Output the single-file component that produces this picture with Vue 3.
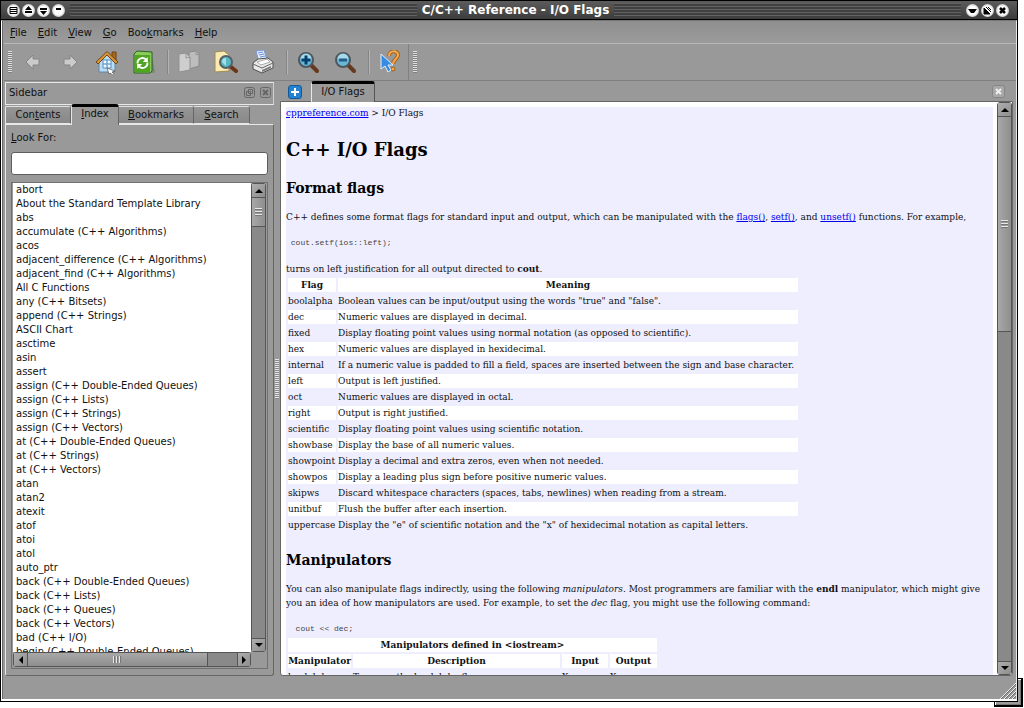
<script setup>
import { ref } from 'vue'

const query = ref('')
const menus = [
  ['', 'F', 'ile'], ['', 'E', 'dit'], ['', 'V', 'iew'], ['', 'G', 'o'], ['Boo', 'k', 'marks'], ['', 'H', 'elp'],
]
const sideTabs = [
  ['Con', 't', 'ents'], ['', 'I', 'ndex'], ['', 'B', 'ookmarks'], ['', 'S', 'earch'],
]
const entries = [
  'abort', 'About the Standard Template Library', 'abs', 'accumulate (C++ Algorithms)', 'acos',
  'adjacent_difference (C++ Algorithms)', 'adjacent_find (C++ Algorithms)', 'All C Functions',
  'any (C++ Bitsets)', 'append (C++ Strings)', 'ASCII Chart', 'asctime', 'asin', 'assert',
  'assign (C++ Double-Ended Queues)', 'assign (C++ Lists)', 'assign (C++ Strings)', 'assign (C++ Vectors)',
  'at (C++ Double-Ended Queues)', 'at (C++ Strings)', 'at (C++ Vectors)', 'atan', 'atan2', 'atexit',
  'atof', 'atoi', 'atol', 'auto_ptr', 'back (C++ Double-Ended Queues)', 'back (C++ Lists)',
  'back (C++ Queues)', 'back (C++ Vectors)', 'bad (C++ I/O)', 'begin (C++ Double-Ended Queues)',
]
const flags = [
  ['boolalpha', 'Boolean values can be input/output using the words "true" and "false".'],
  ['dec', 'Numeric values are displayed in decimal.'],
  ['fixed', 'Display floating point values using normal notation (as opposed to scientific).'],
  ['hex', 'Numeric values are displayed in hexidecimal.'],
  ['internal', 'If a numeric value is padded to fill a field, spaces are inserted between the sign and base character.'],
  ['left', 'Output is left justified.'],
  ['oct', 'Numeric values are displayed in octal.'],
  ['right', 'Output is right justified.'],
  ['scientific', 'Display floating point values using scientific notation.'],
  ['showbase', 'Display the base of all numeric values.'],
  ['showpoint', 'Display a decimal and extra zeros, even when not needed.'],
  ['showpos', 'Display a leading plus sign before positive numeric values.'],
  ['skipws', 'Discard whitespace characters (spaces, tabs, newlines) when reading from a stream.'],
  ['unitbuf', 'Flush the buffer after each insertion.'],
  ['uppercase', 'Display the "e" of scientific notation and the "x" of hexidecimal notation as capital letters.'],
]
</script>

<template>
  <div class="desktop">
    <div class="under-corner"></div>
    <div class="window">
      <header class="titlebar">
        <button class="round" aria-label="Window menu"><svg viewBox="0 0 13 13"><path d="M3 3.500h7v6H3zM3 5.500h7M3 7.500h7" fill="none" stroke="#000" /></svg></button>
        <button class="round" aria-label="Raise"><svg viewBox="0 0 13 13"><path d="M6.500 2 10 6H3zM3 7h7v2H3z" /></svg></button>
        <button class="round" aria-label="Lower"><svg viewBox="0 0 13 13"><path d="M3 4h7v2H3zM3 7h7L6.500 11z" /></svg></button>
        <button class="round" aria-label="Shade"><svg viewBox="0 0 13 13"><path d="M4 4h5v2H4z" /></svg></button>
        <span class="stripes"></span>
        <h1 class="title">C/C++ Reference - I/O Flags</h1>
        <span class="stripes"></span>
        <button class="round" aria-label="Minimize"><svg viewBox="0 0 13 13"><path d="M2 5h9L8 9H5z" /></svg></button>
        <button class="round" aria-label="Maximize"><svg viewBox="0 0 13 13"><path d="M3 4v6h6z" /><path d="M3 4v6h6zM5 3l5 5M7 3l3 3" fill="none" stroke="#000" /></svg></button>
        <button class="round" aria-label="Close window"><svg viewBox="0 0 13 13"><path d="M4 4l5 5M9 4l-5 5" stroke="#000" stroke-width="2.500" /></svg></button>
      </header>

      <div class="body">
        <nav class="menubar">
          <button v-for="m in menus" :key="m[1]">{{ m[0] }}<u>{{ m[1] }}</u>{{ m[2] }}</button>
        </nav>

        <div class="toolbar">
          <span class="grip"></span>
          <button aria-label="Back"><svg viewBox="0 0 24 24"><path d="M5 12l7-7v4h6v6h-6v4z" fill="#cbcbcb" stroke="#868686" /></svg></button>
          <button aria-label="Forward"><svg viewBox="0 0 24 24"><path d="M19 12l-7-7v4H6v6h6v4z" fill="#cbcbcb" stroke="#868686" /></svg></button>
          <button aria-label="Home">
            <svg viewBox="0 0 24 24">
              <path d="M17 2h4v8h-4z" fill="#a8691d" stroke="#71430e" />
              <path d="M4 11l8-8 8 8v11H4z" fill="#b9dcf3" stroke="#5689ae" />
              <path d="M1 12 12 1.500 23 12l-2 2-9-9-9 9z" fill="#d9953d" stroke="#74460f" />
              <path d="M8 10h8v8H8z" fill="#eef7ff" stroke="#5a8db8" />
              <path d="M12 10v8M8 14h8" stroke="#438abe" />
              <path d="M12 18l8 3-3 1 2 2-1 1-3-2-1 1z" fill="#fff" stroke="#555" stroke-width=".7" />
            </svg>
          </button>
          <button aria-label="Reload">
            <svg viewBox="0 0 24 24">
              <path d="M20 6l3 16-2 1H6z" fill="#7d8578" />
              <path d="M2 4 5 1l15 1v19l-2 2H2z" fill="#8bcb5c" stroke="#27631b" />
              <path d="M3 5h15v17H3z" fill="#4fa522" />
              <path d="M5.500 13.500a5 5 0 0 1 8.500-4M15.500 12.500a5 5 0 0 1-8.500 4" fill="none" stroke="#fff" stroke-width="1.800" />
              <path d="M15.800 7v5h-5zM5.200 19v-5h5z" fill="#fff" />
            </svg>
          </button>
          <span class="rule"></span>
          <button aria-label="Copy">
            <svg viewBox="0 0 24 24">
              <path d="M12 2l7-1 3 3v12l-10 3z" fill="#bdbdbd" stroke="#8a8a8a" />
              <path d="M2 4l7-1 4 4v13L2 22z" fill="#cecece" stroke="#909090" />
              <path d="M9 3v5l4-1M19 1v4l3-1" fill="none" stroke="#969696" />
            </svg>
          </button>
          <button aria-label="Find in text">
            <svg viewBox="0 0 24 24">
              <path d="M1 2 10 1l5 4v16L1 22z" fill="#fbebb3" stroke="#a08a50" />
              <path d="M17 17l5 4" stroke="#6d3418" stroke-width="4" stroke-linecap="round" />
              <circle cx="12" cy="12" r="6" fill="#58b7c4" stroke="#555f65" stroke-width="2" />
              <path d="M8 12a4 4 0 0 1 4-4v8z" fill="#a1e1e6" />
            </svg>
          </button>
          <button aria-label="Print">
            <svg viewBox="0 0 24 24">
              <path d="M5 1l8-1 3 10-8 2z" fill="#e4eeff" stroke="#7b98d1" />
              <path d="M7 3l5-1M8 5l5-1M9 7l5-1" stroke="#6e91d7" />
              <path d="M2 13l5-4 10-1 5 4v6l-11 5-9-4z" fill="#e9e9e9" stroke="#505050" />
              <path d="M2 14l9 4 11-5" fill="none" stroke="#666" />
              <path d="M11 20l9-4v2l-9 4z" fill="#777" />
              <path d="M6 12l10-3 3 3-9 3z" fill="#fff" stroke="#aaa" />
            </svg>
          </button>
          <span class="rule"></span>
          <button aria-label="Zoom in">
            <svg viewBox="0 0 24 24">
              <path d="M15 15l6 6" stroke="#653920" stroke-width="4" stroke-linecap="round" />
              <circle cx="10" cy="10" r="7" fill="#69b6d6" stroke="#4d585d" stroke-width="2" />
              <path d="M4.500 9a5.500 5.500 0 0 1 11 0z" fill="#a5d9eb" />
              <path d="M8.500 5.500h3v3h3v3h-3v3h-3v-3h-3v-3h3z" fill="#04406c" />
            </svg>
          </button>
          <button aria-label="Zoom out">
            <svg viewBox="0 0 24 24">
              <path d="M15 15l6 6" stroke="#653920" stroke-width="4" stroke-linecap="round" />
              <circle cx="10" cy="10" r="7" fill="#69b6d6" stroke="#4d585d" stroke-width="2" />
              <path d="M4.500 9a5.500 5.500 0 0 1 11 0z" fill="#a5d9eb" />
              <path d="M6 8.500h8v3H6z" fill="#245d87" />
            </svg>
          </button>
          <span class="rule"></span>
          <button aria-label="What's this?">
            <svg viewBox="0 0 24 24">
              <path d="M11 6c0-6 9-6 9-1 0 4-5 4-5 9" fill="none" stroke="#a8621a" stroke-width="4" />
              <path d="M11 6c0-6 9-6 9-1 0 4-5 4-5 9" fill="none" stroke="#f2ac54" stroke-width="2" />
              <circle cx="15" cy="19" r="2" fill="#f2ac54" stroke="#a25c11" />
              <path d="M3 4v15l4-3 3 6 3-2-3-5h5z" fill="#358ce2" stroke="#e0efff" />
            </svg>
          </button>
          <span class="bar-end"></span>
          <span class="grip"></span>
        </div>

        <div class="main">
          <aside class="sidebar">
            <div class="dock-title">
              <span>Sidebar</span>
              <button aria-label="Float sidebar"><svg viewBox="0 0 11 11"><rect x=".5" y=".5" width="10" height="10" rx="2" /><path d="M4.500 2.500h4v4h-4zM2.500 4.500h4v4h-4z" /></svg></button>
              <button aria-label="Close sidebar"><svg viewBox="0 0 11 11"><rect x=".5" y=".5" width="10" height="10" rx="2" /><path d="M3 3l5 5M8 3L3 8" class="thick" /></svg></button>
            </div>
            <div class="side-tabs" role="tablist">
              <button v-for="(t, i) in sideTabs" :key="t[1]" role="tab" :class="['tab', 'tab-' + i, { active: i === 1 }]">{{ t[0] }}<u>{{ t[1] }}</u>{{ t[2] }}</button>
            </div>
            <div class="panel">
              <label for="look"><u>L</u>ook For:</label>
              <input id="look" v-model="query" type="text">
              <div class="listbox">
                <ul class="entries">
                  <li v-for="e in entries" :key="e">{{ e }}</li>
                </ul>
                <div class="vbar">
                  <button aria-label="Scroll list up"><i class="up"></i></button>
                  <span class="thumb short"></span>
                  <span class="track"></span>
                  <button aria-label="Scroll list down"><i class="down"></i></button>
                </div>
                <div class="hbar">
                  <button aria-label="Scroll list left"><i class="left"></i></button>
                  <span class="thumb"></span>
                  <span class="track"></span>
                  <button aria-label="Scroll list right"><i class="right"></i></button>
                </div>
              </div>
            </div>
          </aside>

          <div class="splitter"><span></span></div>

          <section class="viewer">
            <div class="doc-tabs">
              <button class="add" aria-label="New tab"><svg viewBox="0 0 14 14"><rect x=".5" y=".5" width="13" height="13" rx="2.500" fill="#2482cf" stroke="#12599a" /><path d="M7 3v8M3 7h8" stroke="#fff" stroke-width="2" /></svg></button>
              <button class="tab active doc-tab" role="tab">I/O Flags</button>
              <button class="close" aria-label="Close tab"><svg viewBox="0 0 13 13"><rect x=".5" y=".5" width="12" height="12" rx="2" fill="#a8a8a8" stroke="#858585" /><path d="M4 4l5 5M9 4L4 9" stroke="#efefef" stroke-width="2" /></svg></button>
            </div>
            <div class="doc-frame">
              <article class="doc">
                <div class="page">
                  <div class="crumbs"><a href="#">cppreference.com</a> &gt; I/O Flags</div>
                  <h1>C++ I/O Flags</h1>
                  <h2>Format flags</h2>
                  <p>C++ defines some format flags for standard input and output, which can be manipulated with the <a href="#">flags()</a>, <a href="#">setf()</a>, and <a href="#">unsetf()</a> functions. For example,</p>
                  <pre> cout.setf(ios::left);</pre>
                  <p>turns on left justification for all output directed to <b>cout</b>.</p>
                  <table class="flags">
                    <colgroup><col class="f1"><col class="f2"></colgroup>
                    <thead><tr><th>Flag</th><th>Meaning</th></tr></thead>
                    <tbody>
                      <tr v-for="f in flags" :key="f[0]"><td>{{ f[0] }}</td><td>{{ f[1] }}</td></tr>
                    </tbody>
                  </table>
                  <h2>Manipulators</h2>
                  <p>You can also manipulate flags indirectly, using the following <i>manipulators</i>. Most programmers are familiar with the <b>endl</b> manipulator, which might give you an idea of how manipulators are used. For example, to set the <i>dec</i> flag, you might use the following command:</p>
                  <pre>  cout &lt;&lt; dec;</pre>
                  <table class="manips">
                    <colgroup><col class="c1"><col class="c2"><col class="c3"><col class="c4"></colgroup>
                    <thead>
                      <tr><th colspan="4">Manipulators defined in &lt;iostream&gt;</th></tr>
                      <tr><th>Manipulator</th><th>Description</th><th>Input</th><th>Output</th></tr>
                    </thead>
                    <tbody>
                      <tr><td>boolalpha</td><td>Turns on the boolalpha flag</td><td>X</td><td>X</td></tr>
                    </tbody>
                  </table>
                </div>
              </article>
              <div class="vbar">
                <button aria-label="Scroll page up"><i class="up"></i></button>
                <span class="thumb long"></span>
                <span class="track"></span>
                <button aria-label="Scroll page down"><i class="down"></i></button>
              </div>
            </div>
          </section>
        </div>

        <footer class="status">
          <svg class="size-grip" viewBox="0 0 17 17"><path d="M1 17 17 1M5 17 17 5M9 17 17 9M13 17l4-4" stroke="#f0f0f0" /><path d="M2 17 17 2M6 17 17 6M10 17l7-7M14 17l3-3" stroke="#6a6a6a" /></svg>
        </footer>
      </div>
    </div>
  </div>
</template>

<style>
html, body { margin: 0; background: #fff; overflow: hidden; }
</style>

<style scoped>
* { box-sizing: border-box; }
.desktop { position: relative; height: 100vh; padding: 0 6px 6px 0; font: 10px/14px "DejaVu Sans", sans-serif; color: #111; }
.under-corner { position: absolute; right: 1px; bottom: 1px; width: 29px; height: 29px; background: #9b9b9b; border: 1px solid #000; border-right-width: 2px; border-bottom-width: 2px; box-shadow: inset 1px 1px #fff, inset -1px -1px #777; }
.window { position: relative; height: 100%; display: flex; flex-direction: column; background: #000; }
button { font: inherit; color: inherit; padding: 0; margin: 0; border: 0; background: none; flex: none; }
svg { display: block; width: 100%; height: 100%; }
u { text-underline-offset: 1px; }

.titlebar { height: 20px; flex: none; display: flex; align-items: center; padding: 0 8px 0 6px; gap: 2px; background: linear-gradient(#5c5c5c, #3c3c3c); border: 1px solid #000; }
.round { width: 13px; height: 13px; border-radius: 50%; background: radial-gradient(#fff 45%, #ccc 70%, #999); }
.stripes { flex: 1; height: 14px; margin: 0 3px; background: repeating-linear-gradient(#626262 0 1px, #404040 1px 3px); }
.title { margin: 0; font: bold 12px/18px "DejaVu Sans", sans-serif; color: #fff; }

.body { flex: 1; min-height: 0; display: flex; flex-direction: column; margin: 0 1px 1px; border: 1px solid #e8e8e8; border-top-color: #777; border-left-color: #fff; border-bottom: 2px solid #fff; box-shadow: inset 1px 0 #666; background: #999; padding-left: 2px; }
.menubar { height: 23px; flex: none; display: flex; align-items: center; gap: 11px; padding: 1px 0 0 6px; background: linear-gradient(#8f8f8f, #9b9b9b); border-bottom: 1px solid #b8b8b8; }
.toolbar { height: 37px; flex: none; display: flex; align-items: center; padding-left: 4px; border-bottom: 1px solid #808080; }
.toolbar button { width: 24px; height: 24px; margin-right: 13px; }
.grip { width: 4px; height: 22px; margin-right: 9px; background: repeating-linear-gradient(#e0e0e0 0 1px, #808080 1px 2px); }
.rule { width: 2px; height: 24px; margin: 0 8px 0 -2px; border-left: 1px solid #858585; border-right: 1px solid #b4b4b4; }
.bar-end { width: 1px; height: 36px; background: #808080; margin: 0 4px 0 -7px; }

.main { flex: 1; min-height: 0; display: flex; padding: 1px 3px 0 1px; }
.sidebar { width: 269px; flex: none; display: flex; flex-direction: column; }
.dock-title { height: 23px; flex: none; display: flex; align-items: center; gap: 5px; padding: 0 2px 2px 3px; border: 1px solid #e8e8e8; border-right-color: #d0d0d0; }
.dock-title span { flex: 1; }
.dock-title button { width: 11px; height: 11px; }
.dock-title svg { fill: none; stroke: #666; }
.dock-title .thick { stroke-width: 2; }
.side-tabs { display: flex; flex: none; align-items: flex-end; height: 19px; }
.tab { height: 18px; line-height: 14px; padding-bottom: 1px; text-align: center; background: linear-gradient(#969696, #888); border: 1px solid #666; border-top-color: #e0e0e0; border-left: 0; border-bottom-color: #e8e8e8; border-radius: 0 3px 0 0; }
.tab-0 { width: 66px; border-left: 1px solid #e8e8e8; }
.tab-1 { width: 48px; }
.tab-2 { width: 75px; }
.tab-3 { width: 56px; }
.tab.active { height: 21px; padding-bottom: 4px; background: #999; border-top: 3px solid #000; border-left: 1px solid #e8e8e8; border-bottom: 0; border-radius: 3px 3px 0 0; position: relative; }
.side-tabs .active { margin-bottom: -1px; }
.panel { flex: 1; min-height: 0; display: flex; flex-direction: column; padding: 6px 5px 6px 5px; border: 1px solid #666; border-top-color: #e8e8e8; border-left-color: #e8e8e8; border-radius: 0 0 3px 3px; }
.panel input { height: 23px; flex: none; margin: 7px 0; padding: 0 4px; font: inherit; background: #fff; border: 1px solid #5e5e5e; border-radius: 3px; outline: 0; }
.listbox { flex: 1; min-height: 0; display: grid; grid-template: minmax(0, 1fr) 15px / minmax(0, 1fr) 15px; padding: 0 1px 1px; border: 1px solid #707070; }
.entries { margin: 0; padding: 0 0 0 3px; list-style: none; overflow: hidden; background: #fff; white-space: nowrap; }
.entries li { height: 14px; }
.vbar { display: flex; flex-direction: column; width: 15px; background: #898989; border: 1px solid #555; border-radius: 3px; }
.hbar { display: flex; height: 15px; background: #898989; border: 1px solid #555; border-radius: 3px; }
.vbar button, .hbar button { width: 13px; height: 13px; background: linear-gradient(135deg, #aeaeae, #8e8e8e); display: grid; place-items: center; }
.vbar button:last-child { border-top: 1px solid #555; }
.hbar button:last-child { border-left: 1px solid #555; }
.track { flex: 1; }
.vbar .thumb { border: solid #555; border-width: 1px 0; background: linear-gradient(90deg, #a8a8a8, #8e8e8e); display: grid; place-items: center; }
.hbar .thumb { width: 181px; border: solid #555; border-width: 0 1px; background: linear-gradient(#a8a8a8, #8e8e8e); display: grid; place-items: center; }
.vbar .thumb::after { content: ""; width: 7px; height: 9px; background: repeating-linear-gradient(#e8e8e8 0 1px, #777 1px 2px, #999 2px 3px); }
.hbar .thumb::after { content: ""; width: 9px; height: 7px; background: repeating-linear-gradient(90deg, #e8e8e8 0 1px, #777 1px 2px, #999 2px 3px); }
.thumb.short { height: 30px; }
.thumb.long { height: 216px; }
.up { border: 4px solid transparent; border-top: 0; border-bottom-color: #000; }
.down { border: 4px solid transparent; border-bottom: 0; border-top-color: #000; }
.left { border: 4px solid transparent; border-left: 0; border-right-color: #000; }
.right { border: 4px solid transparent; border-right: 0; border-left-color: #000; }

.splitter { width: 6px; flex: none; display: grid; place-items: center; }
.splitter span { width: 4px; height: 40px; background: repeating-linear-gradient(#e8e8e8 0 1px, #888 1px 2px); }

.viewer { flex: 1; min-width: 0; display: flex; flex-direction: column; }
.doc-tabs { height: 19px; flex: none; display: flex; align-items: center; padding: 0 8px; }
.add { width: 14px; height: 14px; margin-right: 9px; }
.tab.doc-tab { width: 64px; margin-right: auto; padding-bottom: 2px; border-right-color: #555; }
.close { width: 13px; height: 13px; }
.doc-frame { flex: 1; min-height: 0; display: flex; background: #fff; border: 1px solid #666; border-radius: 0 0 3px 3px; }
.doc { flex: 1; min-width: 0; overflow: hidden; padding: 5px 4px 0 5px; font: 9px/14px "DejaVu Serif", serif; }
.page { background: #eef; height: 100%; }
.page a { color: #00e; }
.crumbs { line-height: 12px; }
.page h1 { margin: 19px 0 17px; font-size: 18px; line-height: 24px; color: #000; }
.page h2 { margin: 17px 0 13px; font-size: 14px; line-height: 18px; color: #000; }
.page p { margin: 13px 0 0; }
.page pre { margin: 13px 0 0; font: 8px/12px "Liberation Mono", monospace; color: #444; }
.page table { border-spacing: 2px; white-space: nowrap; }
.page th, .page td { padding: 0; height: 14px; line-height: 14px; }
.page th, .flags tbody tr:nth-child(even) td { background: #fff; }
.manips { margin-top: 1px; }
.f1 { width: 48px; }
.f2 { width: 460px; }
.c1 { width: 63px; }
.c2 { width: 207px; }
.c3 { width: 46px; }
.c4 { width: 47px; }

.status { height: 23px; flex: none; display: flex; justify-content: flex-end; align-items: flex-end; }
.size-grip { width: 17px; height: 17px; fill: none; }
</style>
